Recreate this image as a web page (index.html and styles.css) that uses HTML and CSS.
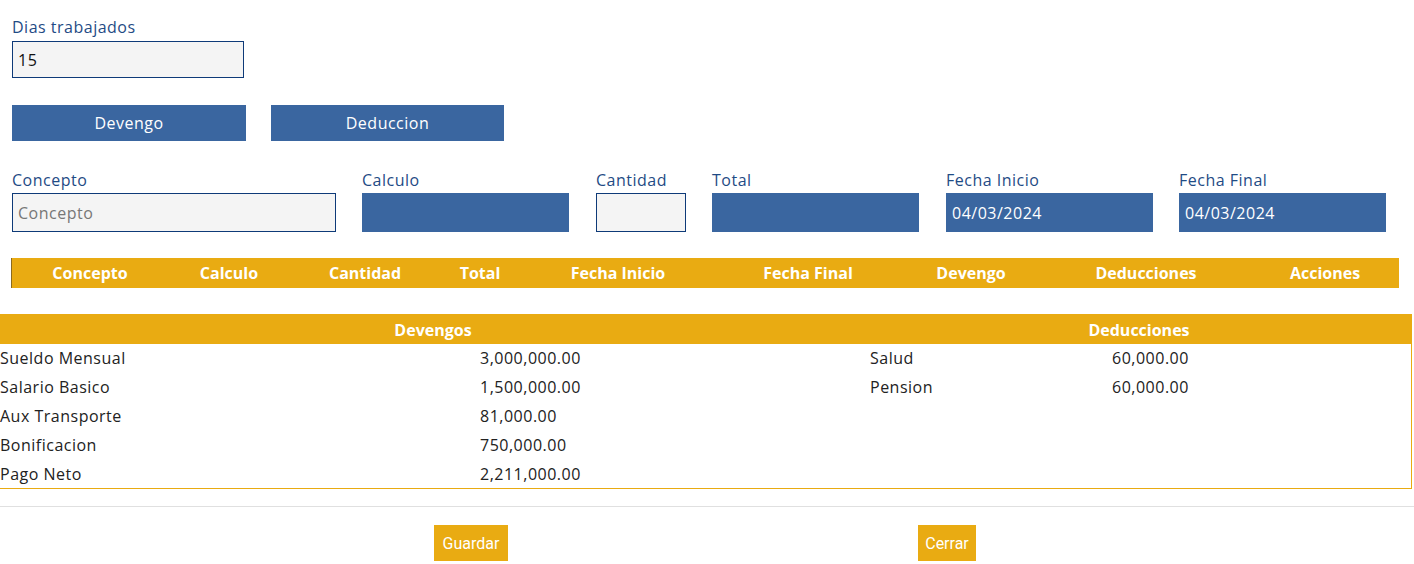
FILE: index.html
```html
<!DOCTYPE html>
<html lang="es">
<head>
<meta charset="utf-8">
<title>Nomina</title>
<link rel="stylesheet" href="styles.css">
</head>
<body>
<div class="page">
  <div class="field dias">
    <label class="lbl">Dias trabajados</label>
    <div class="inp">15</div>
  </div>
  <div class="tabs">
    <button class="btn-blue">Devengo</button>
    <button class="btn-blue">Deduccion</button>
  </div>
  <div class="form-row">
    <div class="field"><label class="lbl">Concepto</label><div class="inp placeholder">Concepto</div></div>
    <div class="field"><label class="lbl">Calculo</label><div class="inp filled"></div></div>
    <div class="field"><label class="lbl">Cantidad</label><div class="inp"></div></div>
    <div class="field"><label class="lbl">Total</label><div class="inp filled"></div></div>
    <div class="field"><label class="lbl">Fecha Inicio</label><div class="inp filled">04/03/2024</div></div>
    <div class="field"><label class="lbl">Fecha Final</label><div class="inp filled">04/03/2024</div></div>
  </div>
  <div class="grid-head">
    <span>Concepto</span><span>Calculo</span><span>Cantidad</span><span>Total</span><span>Fecha Inicio</span><span>Fecha Final</span><span>Devengo</span><span>Deducciones</span><span>Acciones</span>
  </div>
</div>
<div class="summary">
  <div class="sh sh-dev">Devengos</div>
  <div class="sh sh-ded">Deducciones</div>
  <div class="sc">Sueldo Mensual</div><div class="sc">3,000,000.00</div><div class="sc pl">Salud</div><div class="sc">60,000.00</div>
  <div class="sc">Salario Basico</div><div class="sc">1,500,000.00</div><div class="sc pl">Pension</div><div class="sc">60,000.00</div>
  <div class="sc">Aux Transporte</div><div class="sc">81,000.00</div><div class="sc"></div><div class="sc"></div>
  <div class="sc">Bonificacion</div><div class="sc">750,000.00</div><div class="sc"></div><div class="sc"></div>
  <div class="sc">Pago Neto</div><div class="sc">2,211,000.00</div><div class="sc"></div><div class="sc"></div>
</div>
<div class="footer">
  <button class="btn-gold guardar">Guardar</button>
  <button class="btn-gold cerrar">Cerrar</button>
</div>
</body>
</html>
```
FILE: styles.css
```css
* { box-sizing: border-box; }
body {
  margin: 0;
  font-family: "Open Sans", "Liberation Sans", sans-serif;
  font-size: 16px;
  letter-spacing: 0.5px;
  color: #222;
  background: #fff;
}
.page { padding: 17px 12px 0 12px; }
.field { display: flex; flex-direction: column; }
.lbl {
  color: #1f4b85;
  font-size: 16px;
  line-height: 20px;
  margin-bottom: 4px;
  padding-left: 0;
}
.dias { width: 232px; }
.inp {
  height: 37px;
  border: 1px solid #0e3a78;
  background: #f4f4f4;
  padding: 0 5px;
  display: flex;
  align-items: center;
  font-size: 16px;
  color: #111;
}
.placeholder { color: #777; }
.inp.filled { background: #3a66a0; border-color: #3a66a0; color: #fff; }
.tabs { display: flex; gap: 25px; margin-top: 27px; }
.btn-blue {
  width: 234px;
  height: 36px;
  background: #3a66a0;
  border: none;
  color: #fff;
  font-family: inherit;
  font-size: 16px;
  letter-spacing: 0.5px;
  padding: 0;
}
.tabs .btn-blue:last-child { width: 233px; }
.form-row {
  display: grid;
  grid-template-columns: 324px 26px 207px 27px 90px 26px 207px 27px 207px 26px 207px;
  margin-top: 28px;
}
.form-row .field:nth-child(1) { grid-column: 1; }
.form-row .field:nth-child(2) { grid-column: 3; }
.form-row .field:nth-child(3) { grid-column: 5; }
.form-row .field:nth-child(4) { grid-column: 7; }
.form-row .field:nth-child(5) { grid-column: 9; }
.form-row .field:nth-child(6) { grid-column: 11; }
.form-row .lbl { margin-top: 1px; margin-bottom: 3px; }
.form-row .inp { height: 39px; }
.grid-head {
  display: grid;
  grid-template-columns: 156px 122px 150px 80px 196px 184px 142px 208px 150px;
  margin-top: 26px;
  margin-left: -1px;
  width: 1388px;
  height: 30px;
  background: #e9ab12;
  color: #fff;
  font-weight: 700;
  font-size: 16px;
  letter-spacing: 0;
  align-items: center;
  text-align: center;
  border-left: 1px solid #8a6a20;
  padding-bottom: 1px;
}
.summary {
  margin-top: 26px;
  width: 1412px;
  display: grid;
  grid-template-columns: 480px 386px 246px 300px;
  border-right: 1px solid #e9ab12;
  border-bottom: 1px solid #e9ab12;
}
.sh {
  grid-column: span 2;
  height: 30px;
  background: #e9ab12;
  color: #fff;
  font-weight: 700;
  letter-spacing: 0;
  text-align: center;
  line-height: 33px;
}
.sc { height: 29px; line-height: 28px; padding-left: 0; white-space: nowrap; }
.summary > .sc:nth-last-child(-n+4) { height: 28px; }
.sc.pl { padding-left: 4px; }
.footer {
  margin-top: 17px;
  border-top: 1px solid #e0e0e0;
  display: flex;
  padding-top: 18px;
}
.btn-gold {
  height: 36px;
  background: #e9ab12;
  border: none;
  color: #fff;
  font-family: Roboto, sans-serif;
  font-size: 16px;
  letter-spacing: 0;
  padding: 0 5px;
}
.guardar { margin-left: 434px; width: 74px; }
.cerrar { margin-left: 410px; width: 58px; }
```
